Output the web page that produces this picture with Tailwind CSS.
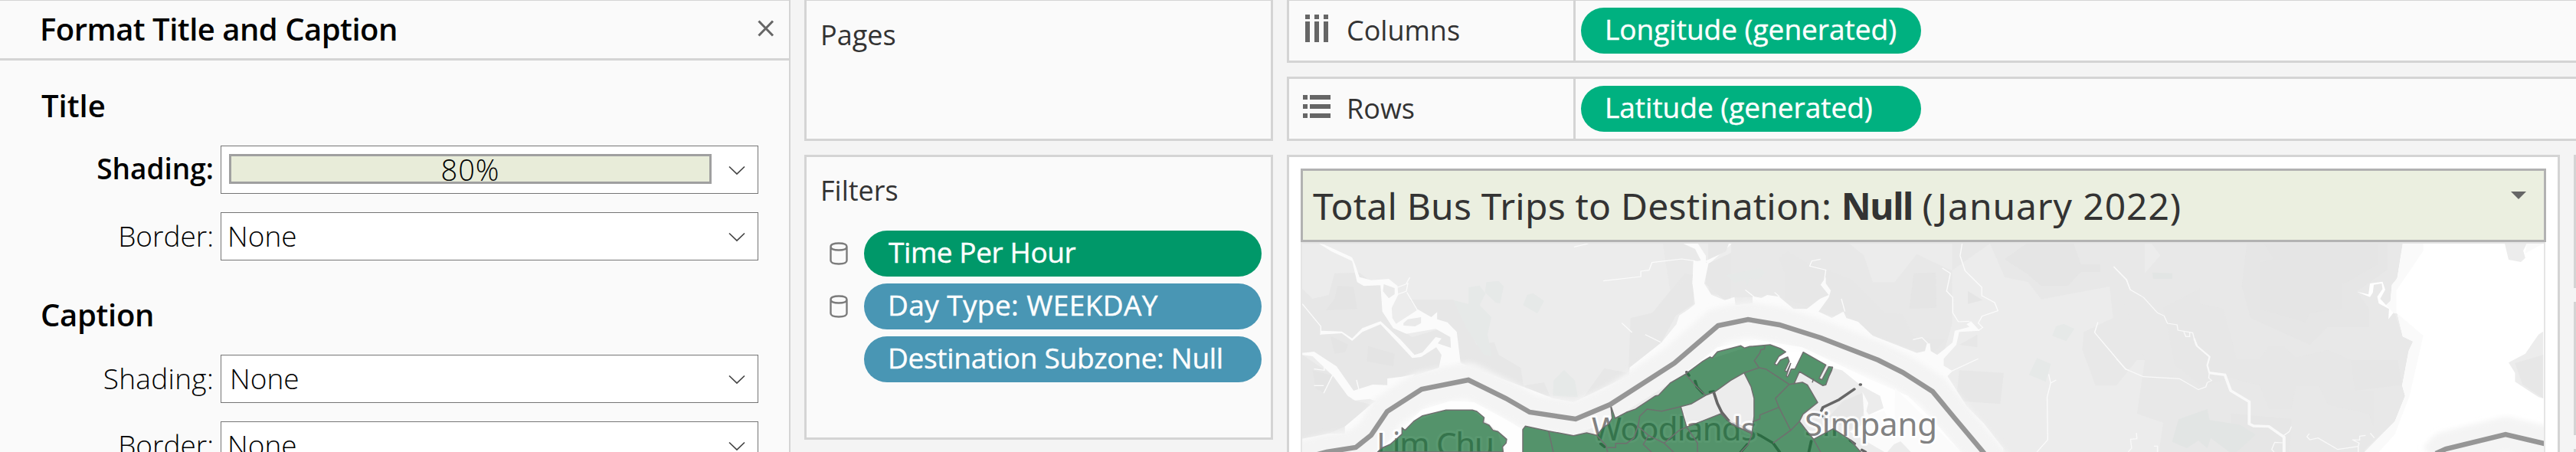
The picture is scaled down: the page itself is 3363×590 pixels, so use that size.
<!DOCTYPE html>
<html lang="en">
<head>
<meta charset="utf-8">
<title>Format Title and Caption</title>
<script src="https://cdn.jsdelivr.net/npm/@tailwindcss/browser@4"></script>
</head>
<body class="w-[3363px] h-[590px] overflow-hidden bg-[#f4f4f4] font-['Open_Sans',sans-serif] text-[37px] text-black whitespace-nowrap">
<svg class="hidden">
  <symbol id="chev" viewBox="0 0 22 13"><path d="M1 1.5 11 11 21 1.5" fill="none" stroke="#444" stroke-width="1.7"/></symbol>
  <symbol id="db" viewBox="0 0 24 30"><path d="M1.5 6v18c0 3 4 4.500 10.500 4.500s10.500-1.500 10.500-4.500V6M1.500 6c0-3 4-4.500 10.500-4.500S22.500 3 22.500 6 18.500 10.500 12 10.500 1.500 9 1.500 6z" fill="none" stroke="#7b7b7b" stroke-width="2.400"/></symbol>
</svg>
<div class="flex h-[590px] gap-[18px]">

  <!-- Format pane -->
  <aside class="w-[1032px] h-full shrink-0 bg-[#fafafa] border-r-2 border-t border-[#d4d4d4] overflow-hidden">
    <header class="h-[78px] border-b-3 border-[#d4d4d4] flex justify-between pl-[52px] pr-[19px]">
      <h1 class="text-[40px] font-semibold leading-[73px] tracking-[-0.5px]">Format Title and Caption</h1>
      <svg class="w-[22px] h-[22px] mt-[25px]" viewBox="0 0 22 22"><path d="M1.500 1.500 20 20.500M20 1.500 1.500 20.500" stroke="#666" stroke-width="3" fill="none"/></svg>
    </header>
    <h2 class="mt-[27px] h-[60px] pl-[54px] text-[40px] font-semibold leading-[63px]">Title</h2>
    <div class="mt-[24px] flex h-[63px]">
      <div class="w-[279px] text-right font-semibold leading-[60px]">Shading:</div>
      <div class="ml-[9px] w-[702px] border border-[#757575] bg-white flex justify-between pl-[10px] pr-[16px]">
        <div class="mt-[10px] w-[630px] h-[39px] border-3 border-[#a0a0a0] bg-[#e8ecd9] text-center leading-[34px] text-[38px] font-light tracking-[1px]">80%</div>
        <svg class="w-[22px] h-[13px] mt-[25px]"><use href="#chev"/></svg>
      </div>
    </div>
    <div class="mt-[24px] flex h-[63px]">
      <div class="w-[279px] text-right font-light leading-[62px]">Border:</div>
      <div class="ml-[9px] w-[702px] border border-[#757575] bg-white flex justify-between pl-[8px] pr-[16px] font-light">
        <span class="leading-[60px]">None</span>
        <svg class="w-[22px] h-[13px] mt-[25px]"><use href="#chev"/></svg>
      </div>
    </div>
    <h2 class="mt-[39px] h-[60px] pl-[53px] text-[40px] font-semibold leading-[63px] tracking-[-0.3px]">Caption</h2>
    <div class="mt-[24px] flex h-[63px]">
      <div class="w-[279px] text-right font-light leading-[62px] tracking-[0.3px]">Shading:</div>
      <div class="ml-[9px] w-[702px] border border-[#757575] bg-white flex justify-between pl-[11px] pr-[16px] font-light">
        <span class="leading-[60px]">None</span>
        <svg class="w-[22px] h-[13px] mt-[25px]"><use href="#chev"/></svg>
      </div>
    </div>
    <div class="mt-[24px] flex h-[63px]">
      <div class="w-[279px] text-right font-light leading-[62px]">Border:</div>
      <div class="ml-[9px] w-[702px] border border-[#757575] bg-white flex justify-between pl-[8px] pr-[16px] font-light">
        <span class="leading-[60px]">None</span>
        <svg class="w-[22px] h-[13px] mt-[25px]"><use href="#chev"/></svg>
      </div>
    </div>
  </aside>

  <!-- Shelves: pages and filters -->
  <section class="w-[612px] shrink-0 text-[#333] text-[36px]">
    <div class="h-[184px] border-3 border-t border-[#d4d4d4] bg-[#fafafa] pl-[18px] pt-[14px]">
      <div class="h-[60px] leading-[61px]">Pages</div>
    </div>
    <div class="mt-[18px] h-[372px] border-3 border-[#d4d4d4] bg-[#fafafa] pl-[17px] pt-[13px]">
      <div class="h-[60px] pl-[1px] leading-[62px]">Filters</div>
      <div class="mt-[23px] pl-[13px] flex flex-col gap-[9px] text-white text-[37px] font-medium [-webkit-text-stroke:0.4px_white]">
        <div class="flex"><svg class="w-[24px] h-[30px] mt-[15px] mr-[21px]"><use href="#db"/></svg><div class="w-[519px] h-[60px] rounded-full bg-[#009869] pl-[32px] leading-[55px] tracking-[-0.4px]">Time Per Hour</div></div>
        <div class="flex"><svg class="w-[24px] h-[30px] mt-[15px] mr-[21px]"><use href="#db"/></svg><div class="w-[519px] h-[60px] rounded-full bg-[#4996b4] pl-[31px] leading-[55px] tracking-[0.4px]">Day Type: WEEKDAY</div></div>
        <div class="flex"><div class="ml-[45px] w-[519px] h-[60px] rounded-full bg-[#4996b4] pl-[31px] leading-[55px] tracking-[-0.3px]">Destination Subzone: Null</div></div>
      </div>
    </div>
  </section>

  <!-- Columns, rows and view -->
  <main class="w-[1683px] shrink-0 text-[#333] text-[36px]">
    <div class="h-[82px] border-l-3 border-b-3 border-t border-[#d4d4d4] bg-[#fafafa] flex">
      <svg class="w-[30px] h-[36px] mt-[18px] ml-[21px] mr-[23px] shrink-0" viewBox="0 0 30 36"><path d="M0 0h6v6H0zM12 0h6v6h-6zM24 0h6v6h-6zM0 9h6v27H0zM12 9h6v27h-6zM24 9h6v27h-6z" fill="#666"/></svg>
      <div class="w-[300px] pl-[1px] leading-[77px] border-r-3 border-[#d4d4d4] shrink-0">Columns</div>
      <div class="ml-[7px] mt-[9px] w-[444px] h-[60px] rounded-full bg-[#00b180] text-white text-[37px] font-medium [-webkit-text-stroke:0.4px_white] pl-[31px] leading-[55px]">Longitude (generated)</div>
    </div>
    <div class="mt-[18px] h-[84px] border-l-3 border-y-3 border-[#d4d4d4] bg-[#fafafa] flex">
      <svg class="w-[36px] h-[30px] mt-[21px] ml-[18px] mr-[20px] shrink-0" viewBox="0 0 36 30"><path d="M0 0h6v6H0zM0 12h6v6H0zM0 24h6v6H0zM9 0h27v6H9zM9 12h27v6H9zM9 24h27v6H9z" fill="#666"/></svg>
      <div class="w-[300px] pl-[1px] leading-[77px] border-r-3 border-[#d4d4d4] shrink-0">Rows</div>
      <div class="ml-[7px] mt-[9px] w-[444px] h-[60px] rounded-full bg-[#00b180] text-white text-[37px] font-medium [-webkit-text-stroke:0.4px_white] pl-[31px] leading-[55px]">Latitude (generated)</div>
    </div>
    <div class="mt-[18px] flex gap-[18px]">
      <div class="w-[1662px] h-[400px] shrink-0 border-3 border-b-0 border-[#d4d4d4] bg-white pl-[15px] pt-[15px]">
        <div class="w-[1626px] h-[96px] border-3 border-[#b2b2b2] bg-[#ebefe0] pl-[13px] pr-[23px] flex justify-between font-['Noto_Sans',sans-serif] text-[48px] leading-[92px]">
          <div><span class="tracking-[0.2px]">Total Bus Trips to Destination: </span><b class="tracking-[-1.4px]">Null</b> <span class="tracking-[0.9px]">(January 2022)</span></div>
          <svg class="w-[20px] h-[10px] mt-[27px]" viewBox="0 0 20 10"><path d="M0 0h20L10 10z" fill="#666"/></svg>
        </div>
        <div class="w-[1625px] border-2 border-b-0 border-[#e5e5e5] overflow-hidden">
        <svg class="block w-[1621px] h-[272px]" viewBox="1700 318 1621 272">
          <defs>
            <filter id="soft" x="-5%" y="-20%" width="110%" height="140%"><feGaussianBlur stdDeviation="3"/></filter>
          </defs>
          <rect x="1700" y="318" width="1621" height="272" fill="#ececec"/>
          <!-- west mainland -->
          <g transform="translate(1660 290) scale(.382653 .333333)">
            <g fill="#e7e7e7">
              <path d="M105 260 140 300 195 285 215 200 300 198 330 225 372 250 380 350 410 400 480 450 570 420 610 450 640 540 570 580 480 600 400 640 345 640 280 660 210 570 150 520 105 510z"/>
              <path d="M470 303H620L700 480 760 470 775 520 850 570 862 655 700 590 640 540 630 430 560 380 500 345z"/>
              <path d="M105 520 210 600 275 695 340 715 250 800 200 825 105 855z"/>
              <path d="M1225 375 1300 355 1360 270 1410 200 1440 205 1440 320 1380 365 1330 470 1218 580z"/>
              <path d="M1335 84H1440L1470 150 1440 200 1360 270z" opacity=".6"/>
              <path d="M860 640 930 628 950 680 900 690zM1065 685 1135 572 1215 590 1130 660z"/>
              <path d="M1490 84H1568V310L1540 300 1480 240 1490 150z"/>
            </g>
            <g fill="#e4e4e4">
              <path d="M225 250 280 252 292 340 185 345 215 300zM330 485 420 515 415 565 325 545zM200 445 262 480 250 510 215 515zM140 580 205 600 180 670 150 650z"/>
            </g>
            <g fill="#e6e9e8">
              <path d="M620 305 672 320V255L710 248 730 280 710 325 750 372 737 440 752 525 725 520 665 415zM733 235 775 230 792 252 780 318 765 315 728 275zM872 285 892 278 930 308 907 358 858 325zM962 620 998 578 1035 620 1045 685 960 680z"/>
            </g>
            <g fill="#fbfbfb">
              <path d="M162 84 180 88 275 138 285 165 300 215 340 227 400 222 430 250 432 285 410 335 412 375 425 398 500 342 545 372 565 352 565 380 600 392 632 430 645 552 570 575 580 520 562 490 510 528 480 532 372 400 310 430 275 465 240 435 165 440 170 425 240 428 275 455 310 415 372 388 440 460 488 520 515 510 560 450 580 455 567 475 612 492 610 450 560 418 460 437 415 415 378 350 372 247 315 250 292 235 275 152 205 115z"/>
              <path d="M105 512 145 507 222 565 280 660 345 636 395 638V612L445 605 490 595 400 720 335 692 285 698 260 680 210 602 140 525 105 520z"/>
              <path d="M1405 84H1455L1482 132V155L1475 240 1500 285 1545 306 1568 300V350H1415L1445 320 1436 240 1440 155 1465 150 1445 105zM1480 152 1550 115 1560 84H1568V120L1490 162z"/>
            </g>
            <g fill="#e9e9e9"><path d="M383 243 420 258 420 282 400 298 380 270zM450 395 465 380 510 372V395L490 408 450 405z"/></g>
            <g fill="none" stroke="#fbfbfb" stroke-width="3.600">
              <path d="M105 320 168 408V440M425 285 460 270 465 240 430 255M460 240 472 216M462 275 498 345M1132 230 1260 213V192L1288 188 1298 158 1400 144 1445 152M1195 395 1230 432M1275 440 1328 470M1032 97 1080 84M178 670 208 600M145 640 178 640M145 575 180 580V560M290 618 298 655"/>
            </g>
          </g>
          <!-- central mainland -->
          <g transform="translate(2200 290) scale(.382653 .333333)">
            <g fill="#e7e7e7">
              <path d="M160 84H560L610 130 640 235 715 235 790 125 910 190 1040 84 1090 215 1170 235 1215 302 1448 252 1460 375 1360 430 1355 500 1400 640 1480 640 1568 590V84H1040L910 84V400L880 520 790 510 640 445 590 390 490 365 455 350 415 342 370 340 320 290 170 295 85 280 65 180z" opacity=".7"/>
              <path d="M320 140 350 115 415 160 480 185 560 220 680 355 740 360 780 450 885 460 840 520 640 445 540 350 420 330 340 300V200z"/>
              <path d="M935 580 1087 590 1075 712 925 700zM935 480 997 440V490z"/>
            </g>
            <g fill="#e4e4e4"><path d="M780 200 855 198 857 335 765 338zM1090 145 1165 84H1325L1350 165H1415V195H1350L1305 250H1215L1170 205zM965 270 1015 305 965 320z" opacity=".8"/></g>
            <g fill="#e6e9e8"><path d="M140 208 255 180 273 198 250 225 220 220 212 250 205 225 170 238zM1265 408 1292 398 1328 418 1300 466 1252 445zM1200 532 1248 555 1230 625 1173 598z"/></g>
            <!-- strait -->
            <path fill="#fbfbfb" d="M-1306 900V848L-1215 828-1161 828V800L-1070 712-920 600-840 570-766 552-540 650-450 690-380 705-190 600V570L-80 470-30 400-20 365 0 350 40 318 25 240 28 150 80 160 65 240 90 285 135 306 168 293 172 325 230 318V290L260 297 280 285 320 292 370 340H415L460 300 490 285 462 245 480 215 480 240 497 268 490 295 455 350 500 375 540 350 550 375 590 390 640 445 790 512 818 505 825 475H835L838 505 860 520 912 472 920 425 970 410 960 400 975 388 1005 425 935 430 925 480 882 535V562L912 583 895 603 960 720 1020 790 1085 885V900z"/>
            <g fill="none" stroke="#fbfbfb" stroke-width="3.600">
              <path d="M462 145 432 152 425 172 480 187 475 225M945 84 938 132 955 190 1012 255V288L1056 315 1067 347 1013 368 1000 395 1015 412 1000 425M877 180 905 200 892 270 913 295V355L932 390 970 388M910 583 1000 535M1240 595 1247 630 1235 685 1237 852 1200 900M1247 630 1266 618M1408 392 1397 432 1502 575 1568 605M1462 174 1505 225 1518 263 1568 298M205 265 235 292M777 460 808 452 828 475M1538 828V848L1520 850 1523 885M305 275 322 292M533 300 545 350"/>
            </g>
          </g>
          <!-- east coast -->
          <g transform="translate(2763 290) scale(.382653 .333333)">
            <path fill="#e8e8e8" d="M120 84H977L958 220 940 245 950 358 977 448 1012 467 997 505 975 640 985 680 950 780 847 890V900H0V640L70 540 97 540 20 300 150 130z"/>
            <g fill="#e4e4e4">
              <path d="M445 84H925V185L820 270 862 340V410H720L660 480 458 375 428 250z" opacity=".55"/>
              <path d="M490 160 537 145 505 84H892V165L768 245V338L660 355 645 392 490 340z" opacity=".7"/>
              <path d="M800 540 720 500 612 532 570 485H520L490 535H410L365 340 285 320V260L160 335 200 560 290 640 390 610 490 640 520 730H597L612 642H692L722 715 862 750 877 800V660H815z" opacity=".3"/>
              <path d="M390 750 597 770 590 900H390zM960 540 975 640 955 640 815 660 800 540z" opacity=".4"/>
            </g>
            <path fill="#ececec" d="M0 640 70 540H97L70 750 160 785 145 900H0z"/>
            <g fill="#e2e5e4"><path d="M123 197 190 200V222H125zM212 772 310 732 318 775 420 793 475 832 410 900H385L322 845 310 885 280 855 240 885 190 860z"/></g>
            <path fill="#fff" d="M977 84H1470V900H847L950 780 985 680 975 640 997 505 1012 467 977 448 958 358 945 355 928 380 930 340 895 318 890 292 908 262 905 240 878 245 875 275 865 293 820 272 860 283 865 240 908 233 917 265 900 300 920 325 935 308 940 245 958 220z"/>
            <path fill="#fafafa" d="M977 84H1047V112L955 268V355L1047 445 1000 680 950 830 895 900H847L950 780 985 680 975 640 997 505 1012 467 977 448 958 358 945 355 920 325 935 308 940 245 958 220z"/>
            <path fill="#ececec" d="M1325 84H1400L1388 112 1395 140 1380 156 1338 147zM1456 428 1440 440 1395 515 1338 550 1360 590V625L1440 685 1456 690z"/>
            <path fill="#e7e7e7" d="M1456 520 1360 552 1385 635 1456 690z"/>
            <path fill="#fafafa" d="M1395 122 1456 84H1400z"/>
            <g fill="none" stroke="#f9f9f9" stroke-width="3.600">
              <path d="M0 185 35 225 47 264 93 295 140 355 163 367 174 396 207 402 210 423 260 433 272 483M230 430 237 448H250V432M0 535 32 575 92 605 215 613 280 656 305 645 310 628 325 620 315 610 317 590M68 825 70 848 48 850 52 885 40 900M128 877H140V900M597 800 590 820 568 838M538 900 530 890 540 862 570 864M658 828 650 840 660 852 688 845 755 890 825 878 828 865 805 852 830 853V838L850 835M825 878V900M866 826 880 845"/>
              <path d="M265 455 275 485 318 527 310 560 317 590" stroke-width="6"/>
              <path d="M317 590 370 598 390 660 453 703V790L468 798 520 800 572 842V900" stroke-width="10"/>
            </g>
          </g>
          <!-- border halo -->
          <g fill="none" stroke="#f4f4f4" stroke-width="46" stroke-linejoin="round" filter="url(#soft)">
            <path d="M1690 601 1732 590 1770 584 1792 568 1811 537 1856 508 1917 496 1966 520 1997 538 2057 547 2102 528 2186 474 2243 425 2282 417 2323 424 2377 441 2452 470 2484 486 2523 511 2552 546 2589 590 2610 615"/>
            <path d="M3180 600 3193 586 3271 567 3330 581"/>
          </g>
          <!-- island -->
          <g transform="translate(2200 290) scale(.382653 .333333)">
            <path fill="#fff" opacity=".75" d="M-900 735-800 700-720 705-600 780-550 815-380 850-200 770 0 590 110 490 240 460 400 490 620 610 760 680 850 780 940 900H-1050z"/>
            <path fill="#ececec" d="M-1050 900-1000 860-920 780-815 736H-726L-640 820-620 900zM-554 900V812L-545 799-381 836-239 768-51 630 60 545 203 493 290 480 345 508 357 555 380 575 403 509 500 570 535 580 600 640 665 680 677 728 625 755 680 900z"/>
            <path fill="#e6e6e6" d="M605 668 612 715 600 800 560 810 500 780 430 840 540 700z"/>
            <path fill="#fbfbfb" d="M605 665 625 708 618 740 628 756 680 738 720 855 800 900H680L560 820 612 790zM716 650 840 790 940 900H715V735z"/>
            <path fill="#ececec" d="M712 870 735 858 770 900H690z"/>
            <path fill="#fff" d="M345 508 403 509 375 575 357 590 345 606 343 586 355 545 350 528 325 540 313 560 305 555 320 525z"/>
            <g fill="none" stroke="#666" stroke-width="14" stroke-linecap="round" stroke-linejoin="round">
              <path d="M577 654 525 695 470 725 465 738M98 668 110 710 125 745 150 780 190 800 260 838 300 865 322 900M5 587 13 600M34 622 40 645 60 670M85 665 97 663M-288 868-275 880M470 758 480 775M430 858 422 900M563 855 578 868M603 892 615 900M190 900 212 870" stroke-width="10"/>
              <path d="M597 636h2" stroke-width="10"/>
            </g>
          </g>
          <g font-family="'Noto Sans',sans-serif" font-size="42" fill="#828282" stroke="#fff" stroke-opacity=".8" stroke-width="6" stroke-linejoin="round" paint-order="stroke">
            <text x="1797" y="595" textLength="154">Lim Chu</text>
            <text x="2078" y="575" textLength="215">Woodlands</text>
            <text x="2356" y="569" textLength="173">Simpang</text>
          </g>
          <!-- subzones -->
          <g transform="translate(2200 290) scale(.382653 .333333)">
            <g fill="#146d34" fill-opacity=".7" stroke="#6f6f6f" stroke-width="1.500" stroke-linejoin="round">
              <path vector-effect="non-scaling-stroke" d="M-1049 900-1036 885-1006 870-966 830V805L-956 815-926 780-896 758-816 736H-726L-711 741-686 765-689 785-669 795-656 815-639 820-609 850-611 865-623 880-621 900z"/>
              <path vector-effect="non-scaling-stroke" fill-rule="evenodd" d="M-554 905V812L-545 799-466 818-381 836-336 825-301 835-281 805-261 790-249 768-254 718-239 768-201 745-171 733-101 680-91 678-51 630 1 595 60 545 85 528 92 532 110 508 190 484 203 493 220 487 290 480 325 495 343 508 320 525 305 555 313 560 325 540 350 528 355 545 340 582 347 586 360 553 345 603 350 606 362 575 375 575 403 509 480 559 457 612 467 617 490 566 503 568 500 580 490 605 480 637 470 640 390 585 372 632 400 627 417 637 452 706 402 752 390 780 410 810 438 850 505 809 560 850 603 905zM-15 722 5 802 60 778 122 750 140 770 160 792 228 828 235 760 235 690 225 645 201 590 155 620 103 663 70 678 20 712z"/>
            </g>
            <g fill="none" stroke="#6f6f6f" stroke-width="1.500">
              <path vector-effect="non-scaling-stroke" d="M272 485 270 497 258 500 255 512 236 542 252 570 201 590M252 570 275 575 355 635 372 632M355 635 308 690 320 725 360 815 300 865M320 725 255 755V770L230 782M360 815 390 780M228 828 215 870 190 900M438 850 462 900M-466 818-450 900M-301 835-270 875-265 900M-265 883H-237V866H-200L-175 845-160 795-155 760-130 732-80 740-15 722M-165 795-125 835-72 865-40 900M-125 835-143 870-115 900M-72 865-20 815 5 802 42 865V900M1 595 35 640 70 678M438 612 434 628"/>
            </g>
          </g>
          <g fill="none" stroke="#969696" stroke-width="6.500" stroke-linejoin="miter">
            <path d="M1690 601 1732 590 1770 584 1790 568 1811 537 1856 508 1917 496 1966 520 1997 538 2057 547 2102 528 2186 474 2243 425 2282 417 2323 424 2377 441 2452 470 2484 486 2523 511 2552 546 2589 590 2600 605"/>
            <path d="M3180 592 3193 586 3271 567 3330 581"/>
          </g>
        </svg>
        </div>
      </div>
      <div class="flex flex-col gap-[18px]">
        <div class="w-[3px] h-[174px] bg-[#d4d4d4]"></div>
        <div class="w-[3px] h-[174px] bg-[#d4d4d4]"></div>
        <div class="w-[3px] h-[10px] bg-[#d4d4d4]"></div>
      </div>
    </div>
  </main>
</div>
</body>
</html>
